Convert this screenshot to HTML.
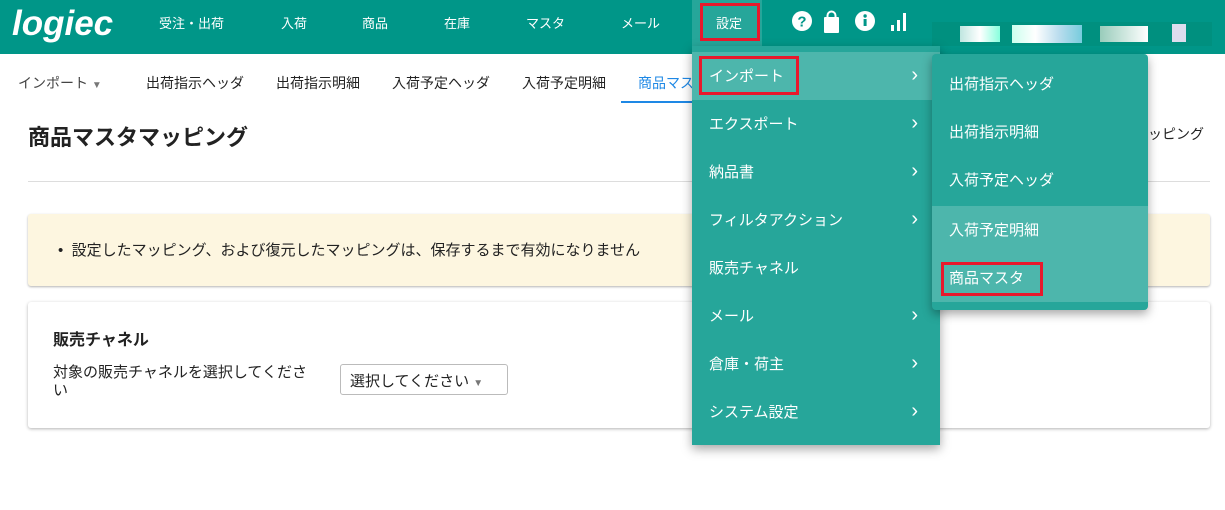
<!DOCTYPE html>
<html><head><meta charset="utf-8"><style>
*{box-sizing:border-box;margin:0;padding:0}
body{width:1225px;height:510px;overflow:hidden;background:#fff;font-family:"Liberation Sans","Noto Sans CJK JP",sans-serif;position:relative;color:#222}
.a{position:absolute;white-space:nowrap}
.hdr{position:absolute;left:0;top:0;width:1225px;height:54px;background:#009688}
.nav{color:#fff;font-size:13px;top:13px}
.sub{font-size:14px;top:73px;color:#222}
.menu{position:absolute;background:#26a69a;box-shadow:0 4px 10px rgba(0,0,0,.35)}
.mi{position:absolute;left:0;height:48px;width:100%;color:#fff;font-size:15px;padding-left:17px;line-height:50px}
.chev{position:absolute;right:22px;top:0;font-size:20px;line-height:46px}
.red{position:absolute;border:3px solid #e8192c}
</style></head><body>
<div class="hdr"></div>
<div class="a" style="left:12px;top:4px;color:#fff;font-size:35px;font-weight:bold;font-style:italic;letter-spacing:0px">logiec</div>
<div class="a nav" style="left:159px">受注・出荷</div>
<div class="a nav" style="left:281px">入荷</div>
<div class="a nav" style="left:362px">商品</div>
<div class="a nav" style="left:444px">在庫</div>
<div class="a nav" style="left:526px">マスタ</div>
<div class="a nav" style="left:621px">メール</div>
<div class="a" style="left:692px;top:0;width:70px;height:46px;background:#26a69a"></div>
<div class="red" style="left:700px;top:3px;width:60px;height:38px"></div>
<div class="a nav" style="left:716px">設定</div>
<svg class="a" style="left:790px;top:10px" width="120" height="24">
<circle cx="12" cy="11" r="10" fill="#fff"/><text x="12" y="16.5" font-size="15" font-weight="bold" text-anchor="middle" fill="#009688" font-family="Liberation Sans">?</text>
<rect x="34" y="7" width="15" height="16" rx="1" fill="#fff"/><path d="M37.5 8 v-2.5 a4 4 0 0 1 8 0 v2.5" stroke="#fff" stroke-width="2" fill="none"/>
<circle cx="75" cy="11" r="10" fill="#fff"/><rect x="73.6" y="9" width="3" height="7" fill="#009688"/><circle cx="75.1" cy="6" r="1.7" fill="#009688"/>
<rect x="101" y="15" width="3" height="6" fill="#fff"/><rect x="107" y="10" width="3" height="11" fill="#fff"/><rect x="113" y="3" width="3" height="18" fill="#fff"/>
</svg>
<div class="a" style="left:932px;top:22px;width:280px;height:24px;background:#00907f"></div>
<div class="a" style="left:960px;top:26px;width:40px;height:16px;background:linear-gradient(90deg,#bfe6e0,#fff,#8fd)"></div>
<div class="a" style="left:1012px;top:25px;width:70px;height:18px;background:linear-gradient(90deg,#cfe,#fff,#bde,#7cd)"></div>
<div class="a" style="left:1100px;top:26px;width:48px;height:16px;background:linear-gradient(90deg,#9cb,#fff)"></div>
<div class="a" style="left:1172px;top:24px;width:14px;height:18px;background:#dde"></div>

<div class="a sub" style="left:18px;color:#444">インポート <span style="font-size:10px;color:#777">▼</span></div>
<div class="a sub" style="left:146px">出荷指示ヘッダ</div>
<div class="a sub" style="left:276px">出荷指示明細</div>
<div class="a sub" style="left:392px">入荷予定ヘッダ</div>
<div class="a sub" style="left:522px">入荷予定明細</div>
<div class="a sub" style="left:638px;color:#1e88e5">商品マスタ</div>
<div class="a" style="left:621px;top:101px;width:80px;height:2px;background:#1e88e5"></div>
<div class="a" style="left:28px;top:120px;font-size:22px;font-weight:bold">商品マスタマッピング</div>
<div class="a" style="left:1148px;top:124px;font-size:14px">ッピング</div>
<div class="a" style="left:28px;top:181px;width:1182px;height:1px;background:#ddd"></div>

<div class="a" style="left:28px;top:214px;width:1182px;height:72px;background:#fdf6e0;box-shadow:0 1px 2px rgba(0,0,0,.3);border-radius:3px"></div>
<div class="a" style="left:58px;top:239px;font-size:15px">•&nbsp; 設定したマッピング、および復元したマッピングは、保存するまで有効になりません</div>
<div class="a" style="left:28px;top:302px;width:1182px;height:126px;background:#fff;box-shadow:0 1px 3px rgba(0,0,0,.3);border-radius:3px"></div>
<div class="a" style="left:53px;top:326px;font-size:16px;font-weight:bold">販売チャネル</div>
<div class="a" style="left:53px;top:364px;font-size:15px;line-height:18px;white-space:normal;width:280px">対象の販売チャネルを選択してくださ<br>い</div>
<div class="a" style="left:340px;top:364px;width:168px;height:31px;border:1px solid #bbb;border-radius:3px;font-size:15px;padding:5px 0 0 9px">選択してください <span style="font-size:10px;color:#777">▼</span></div>

<div class="menu" style="left:692px;top:46px;width:248px;height:399px">
<div class="mi" style="top:6px;background:#4db6ac">インポート<span class="chev">›</span></div>
<div class="mi" style="top:54px">エクスポート<span class="chev">›</span></div>
<div class="mi" style="top:102px">納品書<span class="chev">›</span></div>
<div class="mi" style="top:150px">フィルタアクション<span class="chev">›</span></div>
<div class="mi" style="top:198px">販売チャネル</div>
<div class="mi" style="top:246px">メール<span class="chev">›</span></div>
<div class="mi" style="top:294px">倉庫・荷主<span class="chev">›</span></div>
<div class="mi" style="top:342px">システム設定<span class="chev">›</span></div>
</div>
<div class="red" style="left:699px;top:56px;width:100px;height:39px"></div>
<div class="menu" style="left:932px;top:54px;width:216px;height:256px;border-radius:4px">
<div class="mi" style="top:6px">出荷指示ヘッダ</div>
<div class="mi" style="top:54px">出荷指示明細</div>
<div class="mi" style="top:102px">入荷予定ヘッダ</div>
<div class="mi" style="top:152px;background:#4db6ac">入荷予定明細</div>
<div class="mi" style="top:200px;background:#4db6ac">商品マスタ</div>
</div>
<div class="red" style="left:941px;top:262px;width:102px;height:34px"></div>
</body></html>
